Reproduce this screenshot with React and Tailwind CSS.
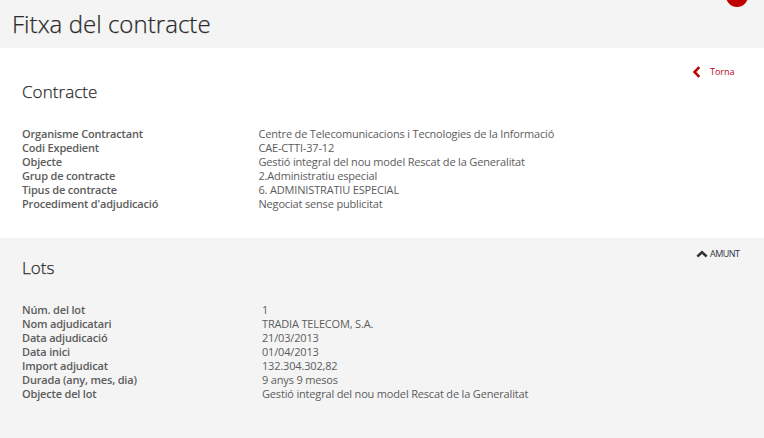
import React from 'react';

const contractRows = [
  { label: 'Organisme Contractant', value: 'Centre de Telecomunicacions i Tecnologies de la Informació' },
  { label: 'Codi Expedient', value: 'CAE-CTTI-37-12' },
  { label: 'Objecte', value: 'Gestió integral del nou model Rescat de la Generalitat' },
  { label: 'Grup de contracte', value: '2.Administratiu especial' },
  { label: 'Tipus de contracte', value: '6. ADMINISTRATIU ESPECIAL' },
  { label: "Procediment d'adjudicació", value: 'Negociat sense publicitat' },
];

const lotRows = [
  { label: 'Núm. del lot', value: '1' },
  { label: 'Nom adjudicatari', value: 'TRADIA TELECOM, S.A.' },
  { label: 'Data adjudicació', value: '21/03/2013' },
  { label: 'Data inici', value: '01/04/2013' },
  { label: 'Import adjudicat', value: '132.304.302,82' },
  { label: 'Durada (any, mes, dia)', value: '9 anys 9 mesos' },
  { label: 'Objecte del lot', value: 'Gestió integral del nou model Rescat de la Generalitat' },
];

const DetailList = ({ rows, columns }) => (
  <dl className={`grid ${columns} text-[11px] leading-[14px] text-[#5c5c5c]`}>
    {rows.map((row) => (
      <React.Fragment key={row.label}>
        <dt className="font-semibold tracking-[-0.18px]">{row.label}</dt>
        <dd className="tracking-[-0.17px]">{row.value}</dd>
      </React.Fragment>
    ))}
  </dl>
);

const SectionTitle = ({ children }) => (
  <h2 className="text-[17px] font-light leading-6 tracking-[0.06px] text-[#2b2b2b] [-webkit-text-stroke:0.25px_#2b2b2b]">
    {children}
  </h2>
);

const App = () => {
  return (
    <div className="relative h-screen overflow-hidden bg-[#f4f4f4] font-['Open_Sans',sans-serif] text-[#333]">
      <header className="h-12 pl-3 pt-2">
        <h1 className="text-2xl font-light leading-8 tracking-[0.04px] text-[#2b2b2b] [-webkit-text-stroke:0.25px_#2b2b2b]">
          Fitxa del contracte
        </h1>
      </header>
      {/* Round button cut off by the top edge */}
      <span className="absolute -top-[15px] left-[726px] size-[22px] rounded-full bg-[#c00000]" />

      <section className="relative h-[190px] bg-white px-[22px] pt-8">
        <a href="#" className="absolute left-[692px] top-[17px] flex items-center gap-[9px] text-[9px] leading-[14px] text-[#b8001c]">
          <svg width="9" height="12" viewBox="0 0 9 12" fill="none" stroke="#c00000" strokeWidth="2.5">
            <path d="M7.3 1.2 2.5 6l4.8 4.8" />
          </svg>
          Torna
        </a>
        <SectionTitle>Contracte</SectionTitle>
        <div className="pt-[23px]">
          <DetailList rows={contractRows} columns="grid-cols-[236.5px_1fr]" />
        </div>
      </section>

      <section className="relative px-[22px] pt-[18px]">
        <a href="#" className="absolute left-[696px] top-[9px] flex items-center gap-[2px] text-[9px] leading-[14px] tracking-[-0.5px] text-[#334]">
          <svg width="12" height="8" viewBox="0 0 12 8" fill="none" stroke="#333" strokeWidth="2.5">
            <path d="M1.3 6.5 6 2.3l4.7 4.2" />
          </svg>
          AMUNT
        </a>
        <SectionTitle>Lots</SectionTitle>
        <div className="pt-[23px]">
          <DetailList rows={lotRows} columns="grid-cols-[240px_1fr]" />
        </div>
      </section>
    </div>
  );
};

export default App;
